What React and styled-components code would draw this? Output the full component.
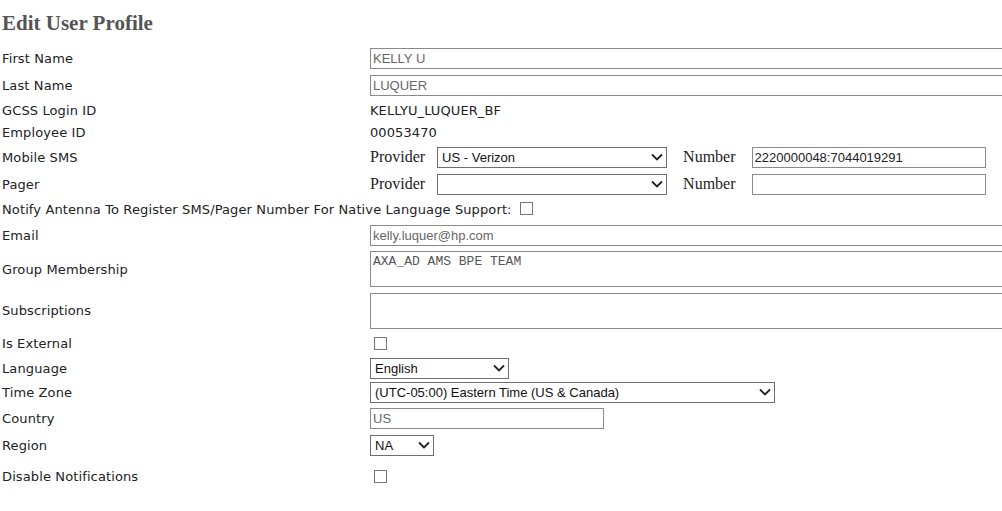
import React from "react";
import styled, { createGlobalStyle } from "styled-components";

const GlobalStyle = createGlobalStyle`
  html, body {
    margin: 0;
    padding: 0;
    background: #ffffff;
    overflow: hidden;
  }
  body {
    font-family: "DejaVu Sans", Verdana, sans-serif;
    font-size: 13px;
    color: #222;
  }
`;

const Page = styled.div`
  width: 1002px;
  height: 511px;
  overflow: hidden;
`;

const Title = styled.h1`
  margin: 0;
  padding: 11px 0 0 2px;
  height: 36px;
  box-sizing: border-box;
  font-family: "Liberation Serif", "Times New Roman", serif;
  font-size: 21px;
  font-weight: bold;
  color: #555;
`;

const Row = styled.div`
  display: grid;
  grid-template-columns: 370px 1fr;
  align-items: center;
  height: ${(p) => p.h}px;
`;

const Label = styled.div`
  padding-left: 2px;
  white-space: nowrap;
  letter-spacing: 0.12px;
`;

const Value = styled.div`
  display: flex;
  align-items: center;
  white-space: nowrap;
`;

const Text = styled.span`
  color: #222;
  letter-spacing: 0.1px;
`;

const TextInput = styled.input`
  box-sizing: border-box;
  width: ${(p) => p.w}px;
  height: 21px;
  margin: 0;
  padding: 0 2px;
  border: 1px solid #8a8a8a;
  font-family: "Liberation Sans", Arial, sans-serif;
  font-size: 13px;
  color: ${(p) => (p.dark ? "#222" : "#666")};
  background: #fff;
  outline: none;
`;

const TextArea = styled.textarea`
  box-sizing: border-box;
  width: 700px;
  height: 36px;
  margin: 0;
  padding: 2px 2px;
  border: 1px solid #8a8a8a;
  font-family: "Liberation Mono", "Courier New", monospace;
  font-size: 13px;
  line-height: 15px;
  color: #555;
  resize: none;
  outline: none;
`;

const SelectWrap = styled.div`
  position: relative;
  width: ${(p) => p.w}px;
  height: 21px;
`;

const Select = styled.select`
  appearance: none;
  box-sizing: border-box;
  width: 100%;
  height: 100%;
  margin: 0;
  padding: 0 20px 0 4px;
  border: 1px solid #6f6f6f;
  border-radius: 0;
  background: #fff;
  font-family: "Liberation Sans", Arial, sans-serif;
  font-size: 13px;
  color: #111;
  outline: none;
`;

const Chevron = styled.svg`
  position: absolute;
  right: 4px;
  top: 6px;
  pointer-events: none;
`;

const SerifLabel = styled.span`
  font-family: "Liberation Serif", "Times New Roman", serif;
  font-size: 16px;
  color: #222;
  margin-left: ${(p) => p.before || 0}px;
  margin-right: ${(p) => p.after || 0}px;
`;

const Check = styled.span`
  display: inline-block;
  box-sizing: border-box;
  width: 13px;
  height: 13px;
  border: 1px solid #777;
  background: #fff;
  margin-left: ${(p) => p.ml || 0}px;
`;

const Dropdown = ({ w, value }) => (
  <SelectWrap w={w}>
    <Select defaultValue={value}>
      <option value={value}>{value}</option>
    </Select>
    <Chevron width="12" height="9" viewBox="0 0 12 9">
      <path d="M1 1.5 L6 6.5 L11 1.5" fill="none" stroke="#222" strokeWidth="1.8" />
    </Chevron>
  </SelectWrap>
);

const ContactRow = ({ label, h, provider, number }) => (
  <Row h={h}>
    <Label>{label}</Label>
    <Value>
      <SerifLabel after={12}>Provider</SerifLabel>
      <Dropdown w={230} value={provider} />
      <SerifLabel before={16} after={16}>
        Number
      </SerifLabel>
      <TextInput w={234} dark defaultValue={number} />
    </Value>
  </Row>
);

export default function App() {
  return (
    <Page>
      <GlobalStyle />
      <Title>Edit User Profile</Title>
      <Row h={25} style={{ marginTop: 10 }}>
        <Label>First Name</Label>
        <Value>
          <TextInput w={700} defaultValue="KELLY U" />
        </Value>
      </Row>
      <Row h={28}>
        <Label>Last Name</Label>
        <Value>
          <TextInput w={700} defaultValue="LUQUER" />
        </Value>
      </Row>
      <Row h={22}>
        <Label>GCSS Login ID</Label>
        <Value>
          <Text>KELLYU_LUQUER_BF</Text>
        </Value>
      </Row>
      <Row h={22}>
        <Label>Employee ID</Label>
        <Value>
          <Text>00053470</Text>
        </Value>
      </Row>
      <ContactRow label="Mobile SMS" h={28} provider="US - Verizon" number="2220000048:7044019291" />
      <ContactRow label="Pager" h={26} provider="" number="" />
      <Row h={25}>
        <Label>
          Notify Antenna To Register SMS/Pager Number For Native Language Support:
          <Check ml={8} style={{ verticalAlign: "-1px" }} />
        </Label>
      </Row>
      <Row h={26}>
        <Label>Email</Label>
        <Value>
          <TextInput w={700} defaultValue="kelly.luquer@hp.com" />
        </Value>
      </Row>
      <Row h={42}>
        <Label>Group Membership</Label>
        <Value>
          <TextArea defaultValue="AXA_AD AMS BPE TEAM" />
        </Value>
      </Row>
      <Row h={41}>
        <Label>Subscriptions</Label>
        <Value>
          <TextArea defaultValue="" />
        </Value>
      </Row>
      <Row h={24}>
        <Label>Is External</Label>
        <Value>
          <Check ml={4} />
        </Value>
      </Row>
      <Row h={26}>
        <Label>Language</Label>
        <Value>
          <Dropdown w={139} value="English" />
        </Value>
      </Row>
      <Row h={23}>
        <Label>Time Zone</Label>
        <Value>
          <Dropdown w={405} value="(UTC-05:00) Eastern Time (US & Canada)" />
        </Value>
      </Row>
      <Row h={29}>
        <Label>Country</Label>
        <Value>
          <TextInput w={234} defaultValue="US" />
        </Value>
      </Row>
      <Row h={24}>
        <Label>Region</Label>
        <Value>
          <Dropdown w={64} value="NA" />
        </Value>
      </Row>
      <Row h={38}>
        <Label>Disable Notifications</Label>
        <Value>
          <Check ml={4} />
        </Value>
      </Row>
    </Page>
  );
}
